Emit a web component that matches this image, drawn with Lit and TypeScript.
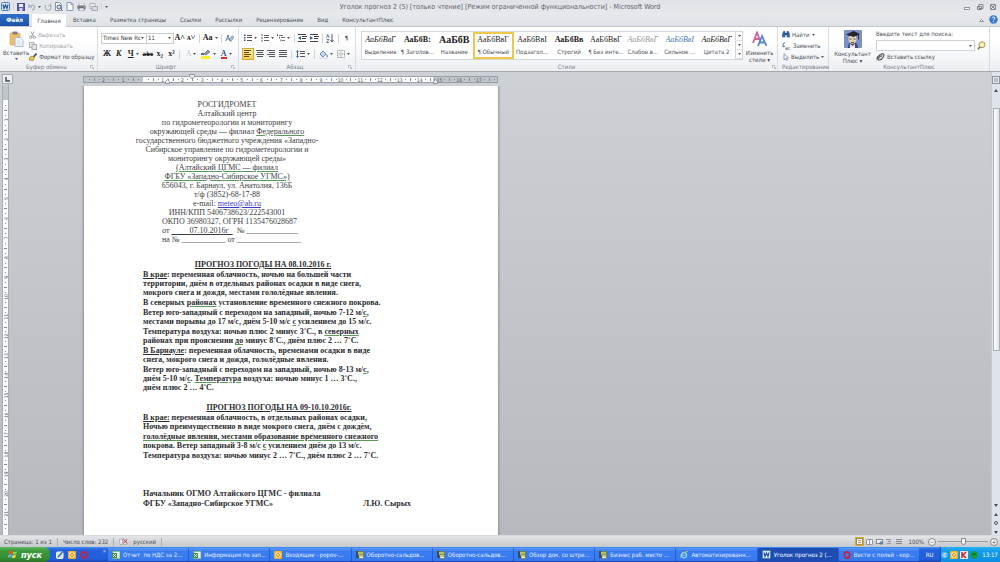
import { LitElement, html, svg, css } from "lit";
import { customElement, property } from "lit/decorators.js";
import { classMap } from "lit/directives/class-map.js";

const ico = (w: number, h: number, body: unknown) =>
  html`<svg class="ico" width=${w} height=${h} viewBox="0 0 ${w} ${h}" aria-hidden="true">${body}</svg>`;

const caret = html`<svg class="caret" width="3" height="2" viewBox="0 0 3 2" aria-hidden="true"><path d="M0 0h3L1.500 2z" fill="#555" /></svg>`;

const lines = (rows: number[][], color = "#555") =>
  rows.map(([x, y, w]) => svg`<rect x=${x} y=${y} width=${w} height="1" fill=${color} />`);

const icons = {
  word: ico(9, 9, svg`<rect x=".5" y=".5" width="8" height="8" rx="1" fill="#dbe8f8" stroke="#4a7fc4"/><path d="M2 2.500l1 4 1.500-3.500L6 6.500l1-4" fill="none" stroke="#1d4f9c" stroke-width="1.100"/>`),
  save: ico(8, 8, svg`<rect x=".5" y=".5" width="7" height="7" fill="#5a62b8" stroke="#474c9a"/><rect x="2" y="1" width="4" height="3" fill="#eef1fb"/><rect x="2.500" y="5" width="3" height="3" fill="#d5d9ee"/>`),
  undo: ico(8, 8, svg`<path d="M1 1v3h3M1.500 3.500C4 1 7 2 6.500 4.500 6.200 6 5 7 4 7" fill="none" stroke="#a9b4c6" stroke-width="1.300"/>`),
  redo: ico(8, 8, svg`<path d="M2.200 2A3 3 0 1 0 6 2M6.500.500V3H4" fill="none" stroke="#aab1bb" stroke-width="1.200"/>`),
  preview: ico(8, 9, svg`<path d="M.500.500h4l2 2v6h-6z" fill="#fff" stroke="#8593a8"/><circle cx="4" cy="5" r="2" fill="#cfe2f7" stroke="#4c5f7d"/><path d="M5.500 6.500l2 2" stroke="#4c5f7d"/>`),
  page: ico(8, 9, svg`<path d="M1 .500h4l2 2v6H1z" fill="#fff" stroke="#7f96bd"/><path d="M5 .500v2h2" fill="none" stroke="#7f96bd"/>`),
  printer: ico(9, 8, svg`<rect x="2" y="0" width="5" height="3" fill="#fff" stroke="#888" stroke-width=".6"/><rect x=".3" y="2.600" width="8.400" height="3.600" rx=".8" fill="#777d86"/><rect x="2" y="5" width="5" height="3" fill="#eef" stroke="#666" stroke-width=".6"/><rect x="6.500" y="3.400" width="1.200" height="1" fill="#9c6"/>`),
  send: ico(9, 8, svg`<rect x="1" y=".5" width="5" height="5" fill="#e9ebee" stroke="#b2b7bd"/><rect x="3" y="3.500" width="5.500" height="4" fill="#d8dbe0" stroke="#a5abb2"/>`),
  cut: ico(7, 8, svg`<path d="M2 .500l2.500 5M5 .500l-2.500 5" stroke="#9ba1a8"/><circle cx="1.800" cy="6.200" r="1.200" fill="none" stroke="#9ba1a8"/><circle cx="5.200" cy="6.200" r="1.200" fill="none" stroke="#9ba1a8"/>`),
  copy: ico(8, 8, svg`<rect x=".5" y=".5" width="4.500" height="5" fill="#eee" stroke="#b0b4ba"/><rect x="3" y="2.500" width="4.500" height="5" fill="#e4e6e9" stroke="#a5a9b0"/>`),
  brush: ico(8, 8, svg`<path d="M7.500.500L4.500 4" stroke="#4a4f59" stroke-width="1.600"/><path d="M1 4l2.500-1L5.500 5 4 7.500 0 7z" fill="#eec64b" stroke="#8b6a1d" stroke-width=".6"/>`),
  paste: ico(15, 16, svg`<rect x="1" y="2" width="10" height="12" rx="1" fill="#ecc06c" stroke="#d5a042" stroke-width=".6"/><rect x="3.500" y=".5" width="5" height="3" rx="1" fill="#7b7f86"/><path d="M6 6.500h5l3 3v6H6z" fill="#f3f8fe" stroke="#8ba5c9" stroke-width=".7"/><path d="M7.500 10h4M7.500 12h5M7.500 13.800h5" stroke="#b9cbe2" stroke-width=".6"/>`),
  clear: ico(9, 9, svg`<path d="M1 7l2-6 2 6M2 5h2.500" fill="none" stroke="#5c7090" stroke-width=".9"/><path d="M4 6l3-4 2 1-3 4.500z" fill="#a9c5ea" stroke="#5674a0" stroke-width=".6"/>`),
  bullets: ico(8, 8, svg`${lines([[3, 1, 5], [3, 3, 5], [3, 6, 5]])}<g fill="#34558b"><rect y=".5" width="1.500" height="1.500"/><rect y="3" width="1.500" height="1.500"/><rect y="5.500" width="1.500" height="1.500"/></g>`),
  numbers: ico(8, 8, svg`${lines([[3, 1, 5], [3, 3, 5], [3, 6, 5]], "#666")}<path d="M1 0v2M1 3v2M1 5.800v2" stroke="#34558b" stroke-width=".9"/>`),
  multi: ico(8, 8, svg`${lines([[2, 1, 4], [4, 3, 4], [5, 6, 3]], "#777")}<path d="M.500 0v2M2.500 3v1.500M4 5.500v2" stroke="#34558b" stroke-width=".9"/>`),
  outdent: ico(9, 8, svg`${lines([[0, 0, 8], [4, 2, 5], [4, 4, 4], [0, 7, 8]], "#444")}<path d="M3 2v4L0 4z" fill="#2b64b5"/>`),
  indent: ico(9, 8, svg`${lines([[0, 0, 8], [4, 2, 5], [4, 4, 4], [0, 7, 8]], "#444")}<path d="M0 2v4l3-2z" fill="#2b64b5"/>`),
  sort: ico(8, 9, svg`<path d="M.500 4l1.300-3.500L3.200 4M.500 5.500H3L.500 8.500H3" fill="none" stroke="#3c5a90" stroke-width=".8"/><path d="M6 0v7M4.500 6L6 8l1.500-2" fill="none" stroke="#444" stroke-width=".9"/>`),
  left: ico(8, 8, lines([[0, 0, 7], [0, 2, 5], [0, 4, 7], [0, 6, 5]], "#5d4a1a")),
  center: ico(8, 8, lines([[0, 0, 8], [1, 2, 6], [0, 4, 8], [1, 6, 6]])),
  right: ico(8, 8, lines([[0, 0, 8], [2, 2, 6], [0, 4, 8], [2, 6, 6]])),
  justify: ico(8, 8, lines([[0, 0, 8], [0, 2, 8], [0, 4, 8], [0, 6, 8]])),
  layout: ico(7, 7, svg`<rect x=".5" y=".5" width="6" height="6" fill="#fdf8e6" stroke="#8a7a4c" stroke-width=".8"/><path d="M2 2.500h3M2 4.500h3" stroke="#8a7a4c" stroke-width=".7"/>`),
  spacing: ico(9, 8, svg`${lines([[4, 1, 5], [4, 3, 5], [4, 6, 5]])}<path d="M1.500 0L3 2H0zM1.500 8L3 6H0zM1 2h1v4H1z" fill="#2b64b5"/>`),
  bucket: ico(9, 9, svg`<path d="M1 4l3-3 3 3-3 3z" fill="#c7d9f1" stroke="#53709c" stroke-width=".8"/><path d="M7.500 4.500c1 1 1 2 .300 2.500" stroke="#2b64b5" fill="none"/><rect y="7.500" width="9" height="1.500" fill="#d8dee8"/>`),
  border: ico(8, 8, svg`<path d="M.500.500h7v7h-7zM4 .500v7M.500 4h7" fill="none" stroke="#9aa3b0" stroke-dasharray="1 .5"/>`),
  marker: ico(10, 9, svg`<path d="M3 4l4-4 2 2-4 3z" fill="#8b98ad" stroke="#4a5870" stroke-width=".6"/><path d="M0 3h3v2H0z" fill="#5c6b85"/><rect y="6" width="9" height="3" fill="#fdee2f"/>`),
  styles: ico(16, 16, svg`<path d="M1 12L5 1.500 9 12M2.500 8h5" fill="none" stroke="#d6619c" stroke-width="1.800"/><path d="M6 15l4-10 4.500 10M8 11.500h5" fill="none" stroke="#4f8bd0" stroke-width="1.800"/>`),
  find: ico(8, 7, svg`<path d="M.500 3l1-2.500h1.500V6H.500zM7.500 3l-1-2.500H5V6h2.500z" fill="#3e6bb0" stroke="#274a82" stroke-width=".6"/><rect x="3" y="2" width="2" height="2" fill="#274a82"/>`),
  replace: ico(9, 8, svg`<path d="M3 .500C1 1 .500 3 1.500 4.500M.200 3.500l1.300 1.500L3 4" fill="none" stroke="#39699f" stroke-width=".9"/><text x="3" y="7.500" font-size="5" fill="#333">ac</text>`),
  select: ico(7, 8, svg`<path d="M2 .800v6l1.500-1.300 1 2 1-.500-1-2h2z" fill="#fff" stroke="#6179a3" stroke-width=".7"/>`),
  owl: ico(18, 18, svg`<rect width="18" height="18" rx="1" fill="#7b8fca"/><path d="M4 18c0-5 2-6 5-6s5 2 5 6z" fill="#404b73"/><ellipse cx="8.500" cy="9" rx="4" ry="5" fill="#e2d6b4"/><path d="M2 4.500L9.500 1 16 4 9.500 7z" fill="#242730"/><path d="M4.500 6c3-1.500 6-1.500 9 0v-2h-9z" fill="#242730"/><path d="M14.500 4.500v5" stroke="#333"/><path d="M5.500 9h2M9.500 9h2M7 12.500h3" stroke="#5a4630" stroke-width="1.100"/><path d="M6 14l2.500 2 2.500-2v4H6z" fill="#e9ebf4"/>`),
  search: ico(9, 9, svg`<circle cx="5" cy="3.700" r="3" fill="#f7eeb5" stroke="#a6945a"/><path d="M3 6L.800 8.200" stroke="#7a6b3d" stroke-width="1.500"/>`),
  clip: ico(9, 8, svg`<path d="M1 6c0-3 5-6 6.500-5S6 7 3.500 7 2 4.500 6 2.500" fill="none" stroke="#4b4f55" stroke-width="1.100"/><path d="M0 7.500L8 .500" stroke="#7a7e85" stroke-width=".7"/>`),
  excel: ico(8, 8, svg`<rect x="1" y=".5" width="7" height="7" fill="#eaf5e4" stroke="#8bb88a"/><path d="M0 2h5v5H0z" fill="#3e8f43"/><path d="M1 3l3 3M4 3L1 6" stroke="#fff" stroke-width=".8"/>`),
  outlook: ico(8, 8, svg`<rect width="8" height="8" rx="1" fill="#f3b127"/><rect x="1.500" y="1.500" width="5" height="5" rx="1" fill="#fff5d4"/><circle cx="4" cy="4" r="1.500" fill="none" stroke="#cf8214"/>`),
  onec: ico(8, 9, svg`<path d="M0 1h3v7H0z" fill="#2a4b7c"/><rect x="2" y="1.500" width="5.500" height="4" fill="#f7ee8a" stroke="#5d6020" stroke-width=".6"/><rect x="3" y="4.500" width="4.500" height="4" fill="#fffbd0" stroke="#5d6020" stroke-width=".6"/><path d="M3 3h4M4 6h3" stroke="#5f8a2b" stroke-width=".9"/>`),
  ie: ico(8, 8, svg`<circle cx="4" cy="4.200" r="2.600" fill="none" stroke="#7fd0ff" stroke-width="1.400"/><path d="M1.500 4.200h5" stroke="#7fd0ff"/><path d="M0 7C1 3 5 .500 8 .500" fill="none" stroke="#e8ce47" stroke-width=".8"/>`),
  opera: ico(8, 8, svg`<ellipse cx="4" cy="4" rx="2.700" ry="3.100" fill="none" stroke="#d11f33" stroke-width="1.700"/>`),
  desktop: ico(8, 8, svg`<rect x=".5" y="1" width="6.500" height="6.500" rx="1" fill="#cfe3fa" stroke="#eef6ff"/><path d="M2 6l4.500-5" stroke="#3968b0" stroke-width="1.300"/>`),
  flag: ico(10, 9, svg`<path d="M1 1.500c1.500-1 2.500-.700 3.500-.200L4 4c-1-.500-2-.500-3.500.200z" fill="#f0572d"/><path d="M5.200 1.600c1.200.500 2.400.500 3.800-.300L8.300 4c-1.300.800-2.400.700-3.600.200z" fill="#8fd045"/><path d="M.300 5c1.500-.700 2.400-.700 3.500-.100L3.200 7.700c-1-.600-2-.600-3.500.200z" fill="#66aef5"/><path d="M4.500 5c1.200.500 2.300.500 3.600-.200L7.400 7.500c-1.200.800-2.300.700-3.500.200z" fill="#f9d13f"/>`),
  spell: ico(9, 7, svg`<path d="M.500 1.500l3-.500.500 5-3 .500zM4 1l3.500.500v5L4 6z" fill="#fff" stroke="#8b97ab" stroke-width=".7"/><path d="M4.500 1.500l3.500 4M8 1.500l-3.500 4" stroke="#d63c3c"/>`),
  arrowLeft: ico(7, 8, svg`<circle cx="3.500" cy="4" r="3.300" fill="#5db8f5"/><path d="M4.500 2L2.500 4l2 2" fill="none" stroke="#fff"/>`),
  kasper: ico(8, 8, svg`<rect width="8" height="8" rx="1" fill="#f4e9e9"/><path d="M2 1v6M6 1L3 4l3 3" stroke="#c1272d" stroke-width="1.500" fill="none"/>`),
  green: ico(8, 8, svg`<circle cx="4" cy="4" r="3.800" fill="#169a3c"/><path d="M2 4c1-1.500 3-1.500 4 0" stroke="#0b5b20" fill="none"/>`),
};

const LAST_MARK = 23;

@customElement("word-ruler")
export class WordRuler extends LitElement {
  @property({ type: Boolean }) vertical = false;

  static styles = css`
    :host { display: block; font-family: "DejaVu Sans Condensed", "DejaVu Sans", sans-serif; }
    svg { display: block; }
    text { font-size: 5px; fill: #555b63; text-anchor: middle; }
  `;

  render() {
    const v = this.vertical;
    const pitch = v ? 19.7 : 19.76;
    const zero = v ? 15 : 60;
    const len = v ? 450 : 415;
    const end = v ? len : 350;
    const marks = [];
    for (let i = v ? 0 : -3; i <= LAST_MARK; i++) {
      const p = zero + i * pitch;
      for (const q of [0.25, 0.5, 0.75]) {
        const t = Math.round(p + q * pitch);
        if (t > len || t < 1) continue;
        const s = q === 0.5 ? 3 : 1;
        marks.push(v
          ? svg`<rect x=${3.500 - s / 2} y=${t} width=${s} height="1" fill="#868d96"/>`
          : svg`<rect x=${t} y=${3.500 - s / 2} width="1" height=${s} fill="#868d96"/>`);
      }
      if (i !== 0 && p > 3 && p < len - 3) {
        marks.push(v
          ? svg`<text transform="translate(5.500 ${p}) rotate(-90)">${Math.abs(i)}</text>`
          : svg`<text x=${p} y="6">${Math.abs(i)}</text>`);
      }
    }
    return v
      ? html`<svg width="7" height=${len} aria-hidden="true"><rect width="7" height=${len} fill="#fbfcfd"/><rect width="7" height=${zero} fill="#c0c5ca"/>${marks}<path d="M.5 0V${len}M6.500 0V${len}" stroke="#a8adb4"/></svg>`
      : html`<svg width=${len} height="10" viewBox="0 -2 ${len} 10" aria-hidden="true"><rect width=${len} height="7" fill="#c0c5ca"/><rect x=${zero} width=${end - zero} height="7" fill="#fbfcfd"/>${marks}<rect x=".5" y=".5" width=${len - 1} height="6" fill="none" stroke="#9aa0a7"/><path d="M82.500 7.500v-2l2-2 2 2v2zM106.500-1.500h5v2l-2.500 2-2.500-2zM350.500 7.500v-2l2-2 2 2v2z" fill="#e9ebee" stroke="#7d848c" stroke-width=".8"/></svg>`;
  }
}

const STYLES: [string, string, string][] = [
  ["АаБбВвГ", "Выделение", "it"],
  ["АаБбВ:", "¶ Заголов...", "b"],
  ["АаБбВ", "Название", "head-style"],
  ["АаБбВвГ", "¶ Обычный", "on"],
  ["АаБбВвІ", "Подзагол...", ""],
  ["АаБбВв", "Строгий", "b"],
  ["АаБбВвГ", "¶ Без инте...", ""],
  ["АаБбВвГ", "Слабое в...", "it pale"],
  ["АаБбВвІ", "Сильное ...", "it blue"],
  ["АаБбВвГ", "Цитата 2", "it"],
];

const TASKS: [unknown, string, boolean][] = [
  [icons.excel, "Отчет  по НДС за 2...", false],
  [icons.excel, "Информация по зап...", false],
  [icons.outlook, "Входящие - popov-...", false],
  [icons.onec, "Оборотно-сальдов...", false],
  [icons.onec, "Оборотно-сальдов...", false],
  [icons.onec, "Обзор док. со штри...", false],
  [icons.onec, "Бизнес раб. место ...", false],
  [icons.ie, "Автоматизированн...", false],
  [icons.word, "Уголок прогноз 2 (...", true],
  [icons.opera, "Вести с полей - кор...", false],
];

@customElement("app-root")
export class AppRoot extends LitElement {
  static styles = css`
    :host { display: flex; flex-direction: column; height: 100vh; overflow: hidden; font-family: "DejaVu Sans Condensed", "DejaVu Sans", sans-serif; font-size: 6px; line-height: 8px; color: #4a4f57; background: #c6cacf; }
    * { box-sizing: border-box; }
    button, select, input { font: inherit; color: inherit; border: 0; padding: 0; margin: 0; background: none; border-radius: 0; }
    button { display: inline-flex; align-items: center; justify-content: center; gap: 2px; white-space: nowrap; }
    .ico, .caret { display: block; flex: none; }

    .title { display: flex; align-items: center; height: 13px; flex: none; background: linear-gradient(#dfe2e6, #e6e8eb); }
    .qat { display: flex; align-items: center; gap: 3px; padding-left: 1px; width: 120px; }
    .qat .sep { height: 7px; }
    .name { flex: 1; text-align: center; font-size: 7px; color: #5c6168; white-space: nowrap; margin: 0; font-weight: 400; }
    .win { display: flex; gap: 5px; width: 120px; justify-content: flex-end; padding-right: 3px; }
    .sep { width: 1px; height: 9px; background: #cfd3d8; flex: none; }
    .row .sep { margin: 0 2px; }

    .tabs { display: flex; height: 14px; flex: none; align-items: stretch; background: linear-gradient(#e6e8eb, #dfe2e6); border-bottom: 1px solid #c3c7cc; }
    .tab { padding: 0 7px; }
    .file { width: 29px; background: linear-gradient(#2f6fc9, #1c53a8); color: #fff; font-weight: 700; margin-top: 1px; border-radius: 1px 1px 0 0; }
    .current { background: #fff; margin: 1px 0 -1px 3px; width: 34px; padding: 0; border-radius: 1px 1px 0 0; }
    .help { margin-left: auto; display: flex; align-items: center; gap: 5px; padding-right: 2px; }

    .ribbon { display: flex; height: 45px; flex: none; background: linear-gradient(#fff 30%, #eceef1); border-bottom: 1px solid #a4a9af; }
    .group { display: flex; flex-direction: column; border-right: 1px solid #d9dce0; padding: 2px 3px 0; flex: none; }
    .body { flex: 1; display: flex; min-width: 0; min-height: 0; }
    .label { display: flex; height: 9px; flex: none; align-items: center; color: #777d85; }
    .label span { flex: 1; text-align: center; }
    .g-clip { width: 98px; }
    .g-font { width: 141px; }
    .g-para { width: 117px; }
    .g-style { flex: 1; min-width: 0; padding-left: 5px; padding-right: 1px; }
    .g-edit { width: 51px; padding-left: 4px; }
    .g-kons { width: 161px; margin-right: 10px; }
    .big { flex-direction: column; line-height: 7px; gap: 2px; justify-content: flex-start; padding-top: 2px; white-space: normal; }
    .paste { width: 27px; }
    .stack { display: flex; flex-direction: column; justify-content: space-around; align-items: flex-start; flex: 1; }
    .off { color: #a3a8ae; }
    .rows { display: flex; flex-direction: column; flex: 1; justify-content: space-between; padding: 3px 0 2px; }
    .row { display: flex; align-items: center; height: 12px; }
    .t12 { width: 12px; height: 12px; }
    .t18 { width: 18px; height: 12px; }
    .font, .size { appearance: none; height: 11px; border: 1px solid #c9cdd3; background: #fff; padding-left: 1px; color: #333; }
    .font { width: 46px; }
    .size { width: 27px; border-left: 0; }
    .drop { position: relative; display: flex; align-items: center; }
    .drop .caret { position: absolute; right: 3px; }
    .serif { font-family: "Liberation Serif", serif; color: #222; font-size: 8px; }
    .bold { font-weight: 700; }
    .ital { font-style: italic; }
    .under { text-decoration: underline; }
    .strike { text-decoration: line-through; font-weight: 700; color: #222; }
    .red { border-bottom: 2px solid #dd2b22; line-height: 7px; color: #34558b; font-weight: 700; }
    .ghost { color: #c2c7cd; }
    .active { background: linear-gradient(#fdeaa0, #fbcf56); border: 1px solid #d9a93a; }

    .gallery { display: flex; flex: 1; min-width: 0; border: 1px solid #d3d6da; background: #fff; margin: 2px 0; }
    .cell { flex: 1; min-width: 0; flex-direction: column; gap: 4px; overflow: hidden; }
    .sample { font-family: "Liberation Serif", serif; font-size: 8px; line-height: 9px; color: #222; }
    .it .sample { font-style: italic; }
    .b .sample { font-weight: 700; }
    .head-style .sample { font-size: 10px; font-weight: 700; }
    .pale .sample { color: #999; }
    .blue .sample { color: #4579b8; }
    .on { border: 2px solid #efc84a; }
    .scroll { width: 7px; flex: none; display: flex; flex-direction: column; border-left: 1px solid #d3d6da; }
    .scroll button { flex: 1; border-bottom: 1px solid #dfe2e5; }
    .change { width: 33px; flex: none; }
    .owl { width: 41px; flex: none; padding-top: 1px; }
    .find { flex: 1; display: flex; flex-direction: column; gap: 2px; padding: 1px 0 0 3px; }
    .find .row { gap: 2px; height: 11px; }
    .find > button { align-self: flex-start; }
    .query { flex: 1; display: flex; align-items: center; position: relative; }
    .query input { width: 100%; height: 11px; border: 1px solid #cfd2d7; background: #fff; }
    .query .caret { position: absolute; right: 3px; }

    .work { flex: 1; min-height: 0; display: flex; background: linear-gradient(#cdd1d5, #b6babe); overflow: hidden; }
    .side { width: 14px; padding: 2px 0 0 2px; flex: none; display: flex; flex-direction: column; align-items: flex-start; gap: 1px; }
    .corner { width: 11px; height: 11px; border: 1px solid #a5abb2; background: #eef0f2; }
    .canvas { flex: 1; min-width: 0; padding-left: 69px; overflow: hidden; display: flex; flex-direction: column; }
    .hr { padding-top: 2px; height: 14px; flex: none; }
    .paper { width: 414px; flex: 1; min-height: 0; background: #fff; box-shadow: 0 0 2px 1px #8d9298; margin-left: 1px; padding: 14px 59px 0; color: #2b2d30; font-family: "Liberation Serif", serif; font-size: 8px; line-height: 9px; white-space: nowrap; overflow: hidden; clip-path: inset(0 -4px); }
    .paper p, .paper h2 { margin: 0; font-size: inherit; }
    .head { width: 168px; display: flex; flex-direction: column; align-items: center; color: #3b3e42; }
    .form { align-self: flex-start; padding-left: 19px; }
    .fill { white-space: pre; }
    .gr { text-decoration: underline #5a9a5a; }
    .paper a { color: #3a3acb; }
    .section { display: flex; flex-direction: column; gap: 1px; margin-top: 16px; font-weight: 700; }
    .section + .section { margin-top: 11px; }
    .section h2 { width: 240px; text-align: center; text-decoration: underline; }
    .second h2 { width: 272px; }
    .sign { margin-top: 29px; display: flex; align-items: flex-end; justify-content: space-between; width: 268px; font-weight: 700; line-height: 10px; }

    .vbar { width: 9px; flex: none; background: #dfe4ea; border-left: 1px solid #c5cad0; display: flex; flex-direction: column; align-items: center; padding-top: 3px; gap: 3px; }
    .vbar button { width: 8px; height: 6px; }
    .vbar .tall { height: 9px; }
    .vbar .thumb { height: auto; flex: 5; width: 7px; background: linear-gradient(90deg, #fff, #dfe2e8); border: 1px solid #a9aeb6; margin-top: 12px; }
    .vbar .gap { flex: 3; }

    .status { height: 12px; flex: none; display: flex; align-items: center; gap: 5px; padding: 0 2px 0 4px; background: linear-gradient(#e3e5e7, #c6c9cd); border-top: 1px solid #d7dadd; }
    .status .sep { background: #a9aeb4; height: 8px; }
    .views { margin-left: auto; display: flex; align-items: center; gap: 1px; }
    .views button { width: 9px; height: 9px; }
    .zoom { display: flex; align-items: center; gap: 2px; }
    .zoom span { margin-right: 2px; }
    .round { width: 8px; height: 8px; border: 1px solid #80858c; border-radius: 50%; background: #f5f6f7; line-height: 6px; }
    .range { appearance: none; width: 50px; height: 8px; background: linear-gradient(#989da3, #989da3) center / 100% 1px no-repeat; }
    .range::-webkit-slider-thumb { appearance: none; width: 5px; height: 7px; background: #f4f5f6; border: 1px solid #83888f; border-radius: 0 0 3px 3px; }

    .bar { height: 15px; flex: none; display: flex; align-items: stretch; background: linear-gradient(#3f8cf3, #2560dc 20%, #245edb 80%, #1a46b4); color: #fff; }
    .start { width: 50px; flex: none; background: linear-gradient(#5fb85e, #3a9a3b 25%, #338f34 75%, #2a7029); border-radius: 0 6px 6px 0; font-size: 9px; font-weight: 700; font-style: italic; gap: 3px; }
    .quick { display: flex; align-items: center; gap: 4px; width: 58px; padding: 0 2px 0 6px; flex: none; }
    .quick span { margin-left: auto; align-self: flex-start; }
    .tasks { flex: 1; display: flex; min-width: 0; gap: 1px; padding: 1px 0; }
    .task { flex: 1; min-width: 0; justify-content: flex-start; gap: 3px; padding-left: 4px; background: linear-gradient(#5a9bfa, #3a7df1 25%, #3878ee); border-radius: 1px; overflow: hidden; color: #e6efff; white-space: pre; }
    .pressed { background: #1e4db2; color: #fff; }
    .lang { width: 21px; text-align: center; align-self: center; }
    .tray { display: flex; align-items: center; gap: 2px; width: 60px; flex: none; background: linear-gradient(#2ab0f2, #129bea 30%, #0f8fe0); border-left: 1px solid #1552b8; }
    .tray time { margin: 0 auto; }
  `;

  private arrow(up: boolean) {
    return html`<svg class="ico" width="4" height="3" viewBox="0 0 4 3" aria-hidden="true"><path d=${up ? "M0 3L2 0l2 3z" : "M0 0h4L2 3z"} fill="#4b5058" /></svg>`;
  }

  private launcher() {
    return ico(4, 4, svg`<path d="M.500 3V.500H3M2 2l2 2M4 2v2H2" fill="none" stroke="#9aa0a7" stroke-width=".7"/>`);
  }

  private titleBar() {
    return html`
      <header class="title">
        <div class="qat">
          ${icons.word}<span class="sep"></span>
          <button aria-label="Сохранить">${icons.save}</button>
          <button aria-label="Отменить">${icons.undo}${caret}</button>
          <button aria-label="Повторить">${icons.redo}</button>
          <button aria-label="Просмотр">${icons.preview}</button>
          <button aria-label="Создать">${icons.page}</button>
          <button aria-label="Печать">${icons.printer}</button>
          <button aria-label="Отправить">${icons.send}</button>
          <span class="sep"></span>${caret}
        </div>
        <h1 class="name">Уголок прогноз 2 (5) [только чтение] [Режим ограниченной функциональности] - Microsoft Word</h1>
        <div class="win">
          <button aria-label="Свернуть">${ico(8, 8, svg`<rect x="1.500" y="4.500" width="5" height="2" fill="#fff" stroke="#7c828a" stroke-width=".8"/>`)}</button>
          <button aria-label="Развернуть">${ico(8, 8, svg`<path d="M3 1.500h4v4H3zM1.500 3.500h4v3h-4z" fill="#eee" stroke="#7c828a"/>`)}</button>
          <button aria-label="Закрыть">${ico(8, 8, svg`<path d="M1.500 1.500h5v5h-5zM2 2l4 4M6 2L2 6" fill="none" stroke="#858b92"/>`)}</button>
        </div>
      </header>
      <nav class="tabs">
        <button class="tab file">Файл</button>
        <button class="tab current">Главная</button>
        ${["Вставка", "Разметка страницы", "Ссылки", "Рассылки", "Рецензирование", "Вид", "КонсультантПлюс"].map((t) => html`<button class="tab">${t}</button>`)}
        <div class="help">
          <button aria-label="Свернуть ленту">${ico(5, 4, svg`<path d="M.500 3.500l2-2 2 2z" fill="#fff" stroke="#7c828a" stroke-width=".8"/>`)}</button>
          <button aria-label="Справка">${ico(9, 9, svg`<circle cx="4.500" cy="4.500" r="4.200" fill="#3678cf"/><path d="M3 3.500c0-2 3-2 3-.300 0 1-1.500 1-1.500 2.200M4.500 6.300v1" fill="none" stroke="#fff"/>`)}</button>
        </div>
      </nav>`;
  }

  private ribbon() {
    return html`
      <div class="ribbon">
        <section class="group g-clip">
          <div class="body">
            <button class="big paste">${icons.paste}Вставить${caret}</button>
            <div class="stack">
              <button class="off">${icons.cut}Вырезать</button>
              <button class="off">${icons.copy}Копировать</button>
              <button>${icons.brush}Формат по образцу</button>
            </div>
          </div>
          <div class="label"><span>Буфер обмена</span>${this.launcher()}</div>
        </section>
        <section class="group g-font">
          <div class="body rows">
            <div class="row">
              <span class="drop"><select class="font" aria-label="Шрифт"><option>Times New Rc</option></select>${caret}</span>
              <span class="drop"><select class="size" aria-label="Размер"><option>11</option></select>${caret}</span>
              <button class="t12 serif bold">A˄</button>
              <button class="t12 serif bold">ᴀ˅</button>
              <span class="sep"></span>
              <button class="t18 serif bold">Aa${caret}</button>
              <span class="sep"></span>
              <button class="t12" aria-label="Очистить формат">${icons.clear}</button>
            </div>
            <div class="row">
              <button class="t12 serif bold">Ж</button>
              <button class="t12 serif bold ital">К</button>
              <button class="t18 serif bold"><span class="under">Ч</span>${caret}</button>
              <button class="t12 strike">abc</button>
              <button class="t12 serif bold">x₂</button>
              <button class="t12 serif bold">x²</button>
              <span class="sep"></span>
              <button class="t18 serif"><span class="ghost">A</span>${caret}</button>
              <button class="t18" aria-label="Выделение цветом">${icons.marker}${caret}</button>
              <button class="t18 serif"><span class="red">A</span>${caret}</button>
            </div>
          </div>
          <div class="label"><span>Шрифт</span>${this.launcher()}</div>
        </section>
        <section class="group g-para">
          <div class="body rows">
            <div class="row">
              <button class="t18" aria-label="Маркеры">${icons.bullets}${caret}</button>
              <button class="t18" aria-label="Нумерация">${icons.numbers}${caret}</button>
              <button class="t18" aria-label="Многоуровневый список">${icons.multi}${caret}</button>
              <span class="sep"></span>
              <button class="t12" aria-label="Уменьшить отступ">${icons.outdent}</button>
              <button class="t12" aria-label="Увеличить отступ">${icons.indent}</button>
              <span class="sep"></span>
              <button class="t12" aria-label="Сортировка">${icons.sort}</button>
              <span class="sep"></span>
              <button class="t12 bold">¶</button>
            </div>
            <div class="row">
              <button class="t12 active" aria-label="По левому краю">${icons.left}</button>
              <button class="t12" aria-label="По центру">${icons.center}</button>
              <button class="t12" aria-label="По правому краю">${icons.right}</button>
              <button class="t12" aria-label="По ширине">${icons.justify}</button>
              <span class="sep"></span>
              <button class="t18" aria-label="Интервал">${icons.spacing}${caret}</button>
              <span class="sep"></span>
              <button class="t18" aria-label="Заливка">${icons.bucket}${caret}</button>
              <button class="t18" aria-label="Границы">${icons.border}${caret}</button>
            </div>
          </div>
          <div class="label"><span>Абзац</span>${this.launcher()}</div>
        </section>
        <section class="group g-style">
          <div class="body">
            <div class="gallery">
              ${STYLES.map(([s, n, k]) => html`<button class="cell ${k}"><span class="sample">${s}</span><span>${n}</span></button>`)}
              <div class="scroll">
                <button aria-label="Вверх">${caret}</button><button aria-label="Вниз">${caret}</button><button aria-label="Ещё">${caret}</button>
              </div>
            </div>
            <button class="big change">${icons.styles}<span>Изменить<br />стили ▾</span></button>
          </div>
          <div class="label"><span>Стили</span>${this.launcher()}</div>
        </section>
        <section class="group g-edit">
          <div class="body stack">
            <button>${icons.find}Найти ${caret}</button>
            <button>${icons.replace}Заменить</button>
            <button>${icons.select}Выделить ${caret}</button>
          </div>
          <div class="label"><span>Редактирование</span></div>
        </section>
        <section class="group g-kons">
          <div class="body">
            <button class="big owl">${icons.owl}<span>Консультант<br />Плюс ▾</span></button>
            <div class="find">
              <label for="query">Введите текст для поиска:</label>
              <div class="row">
                <span class="query"><input id="query" type="text" />${caret}</span>
                <button aria-label="Искать">${icons.search}</button>
              </div>
              <button>${icons.clip}Вставить ссылку</button>
            </div>
          </div>
          <div class="label"><span>КонсультантПлюс</span></div>
        </section>
      </div>`;
  }

  private letter() {
    return html`
      <article class="paper">
        <div class="head">
          <p>РОСГИДРОМЕТ</p>
          <p>Алтайский центр</p>
          <p>по гидрометеорологии и мониторингу</p>
          <p>окружающей среды — филиал <span class="gr">Федерального</span></p>
          <p>государственного бюджетного учреждения «Западно-</p>
          <p>Сибирское управление по гидрометеорологии и</p>
          <p>мониторингу окружающей среды»</p>
          <p class="gr">(Алтайский ЦГМС — филиал</p>
          <p class="gr">ФГБУ «Западно-Сибирское УГМС»)</p>
          <p>656043, г. Барнаул, ул. Анатолия, 136Б</p>
          <p>т/ф (3852)-68-17-88</p>
          <p>e-mail: <a href="mailto:meteo@ab.ru">meteo@ab.ru</a></p>
          <p>ИНН/КПП 5406738623/222543001</p>
          <p class="form">ОКПО 36980327, ОГРН 1135476028687</p>
          <p class="form fill">от <u>         07.10.2016г  </u>  № _____________</p>
          <p class="form">на № ___________ от ________________</p>
        </div>
        <section class="section">
          <h2>ПРОГНОЗ ПОГОДЫ НА 08.10.2016 г.</h2>
          <p><u>В крае</u>: переменная облачность, ночью на большей части<br />территории, днём в отдельных районах осадки в виде снега,<br />мокрого снега и дождя, местами гололёдные явления.</p>
          <p>В северных <span class="gr">районах</span> установление временного снежного покрова.</p>
          <p>Ветер юго-западный с переходом на западный, ночью 7-12 м/<span class="gr">с</span>,<br />местами порывы до 17 м/с, днём 5-10 м/с <span class="gr">с</span> усилением до 15 м/с.</p>
          <p>Температура воздуха: ночью плюс 2 минус 3˚С., в <span class="gr">северных</span><br />районах при прояснении <span class="gr">до</span> минус 8˚С., днём плюс 2 … 7˚С.</p>
          <p><u>В Барнауле</u>: переменная облачность, временами осадки в виде<br />снега, мокрого снега и дождя, гололёдные явления.</p>
          <p>Ветер юго-западный с переходом на западный, ночью 8-13 м/<span class="gr">с</span>,<br />днём 5-10 м/<span class="gr">с</span>. <span class="gr">Температура</span> воздуха: ночью минус 1 … 3˚С.,<br />днём плюс 2 … 4˚С.</p>
        </section>
        <section class="section second">
          <h2>ПРОГНОЗ ПОГОДЫ НА 09-10.10.2016г.</h2>
          <p><u>В крае:</u> переменная облачность, в отдельных районах осадки,<br />Ночью преимущественно в виде мокрого снега, днём с дождём,</p>
          <p><span class="gr">гололёдные явления, местами образование временного снежного</span><br />покрова. Ветер западный 3-8 м/с <span class="gr">с</span> усилением днём до 13 м/с.</p>
          <p>Температура воздуха: ночью минус 2 … 7˚С., днём плюс 2 … 7˚С.</p>
        </section>
        <footer class="sign">
          <span>Начальник ОГМО Алтайского ЦГМС - филиала<br />ФГБУ «Западно-Сибирское УГМС»</span>
          <span>Л.Ю. Сырых</span>
        </footer>
      </article>`;
  }

  private statusBar() {
    return html`
      <div class="status">
        <span>Страница: 1 из 1</span><span class="sep"></span>
        <span>Число слов: 232</span><span class="sep"></span>
        ${icons.spell}<span>русский</span><span class="sep"></span>
        <div class="views">
          <button class="active" aria-label="Разметка">${icons.layout}</button>
          <button aria-label="Чтение">${ico(7, 6, svg`<path d="M.500.500h6v5h-6zM3.500.500v5" fill="#f4f5f6" stroke="#81878f" stroke-width=".8"/>`)}</button>
          <button aria-label="Веб">${ico(7, 6, svg`<rect x=".5" y=".5" width="6" height="4" fill="#f4f5f6" stroke="#81878f"/><circle cx="5" cy="4" r="1.700" fill="#5c7fb1"/>`)}</button>
          <button aria-label="Структура">${ico(6, 6, lines([[0, 0, 5], [2, 2, 3], [1, 4, 4]], "#9297a0"))}</button>
          <button aria-label="Черновик">${ico(6, 6, lines([[0, 0, 6], [0, 2, 6], [0, 4, 6]], "#81878f"))}</button>
        </div>
        <div class="zoom">
          <span>100%</span>
          <button class="round" aria-label="Уменьшить">−</button>
          <input class="range" type="range" min="0" max="100" value="50" aria-label="Масштаб" />
          <button class="round" aria-label="Увеличить">+</button>
        </div>
      </div>`;
  }

  private taskBar() {
    return html`
      <footer class="bar">
        <button class="start">${icons.flag}пуск</button>
        <div class="quick">${icons.desktop}${icons.outlook}${icons.opera}<span>»</span></div>
        <div class="tasks">
          ${TASKS.map(([i, t, p]) => html`<button class=${classMap({ task: true, pressed: p })}>${i}${t}</button>`)}
        </div>
        <span class="lang">RU</span>
        <div class="tray">${icons.arrowLeft}${icons.outlook}${icons.kasper}${icons.green}<time>13:17</time></div>
      </footer>`;
  }

  render() {
    return html`
      ${this.titleBar()} ${this.ribbon()}
      <main class="work">
        <div class="side">
          <button class="corner" aria-label="Табуляция">${ico(5, 5, svg`<path d="M1 0v4h4" fill="none" stroke="#444" stroke-width="1.400"/>`)}</button>
          <word-ruler vertical></word-ruler>
        </div>
        <div class="canvas">
          <word-ruler class="hr"></word-ruler>
          ${this.letter()}
        </div>
        <div class="vbar">
          <button class="tall" aria-label="Линейка">${ico(8, 8, svg`<rect x=".5" y=".5" width="7" height="7" fill="#e6e9ec" stroke="#8d949c"/><path d="M2 3h4M2 5h4" stroke="#8d949c"/>`)}</button>
          <button aria-label="Вверх">${this.arrow(true)}</button>
          <button class="thumb" aria-label="Прокрутка"></button>
          <span class="gap"></span>
          <button aria-label="Вниз">${this.arrow(false)}</button>
          <button aria-label="Предыдущая страница">${this.arrow(true)}</button>
          <button aria-label="Объект перехода">${ico(4, 4, svg`<circle cx="2" cy="2" r="1.500" fill="none" stroke="#555"/>`)}</button>
          <button aria-label="Следующая страница">${this.arrow(false)}</button>
        </div>
      </main>
      ${this.statusBar()} ${this.taskBar()}`;
  }
}
